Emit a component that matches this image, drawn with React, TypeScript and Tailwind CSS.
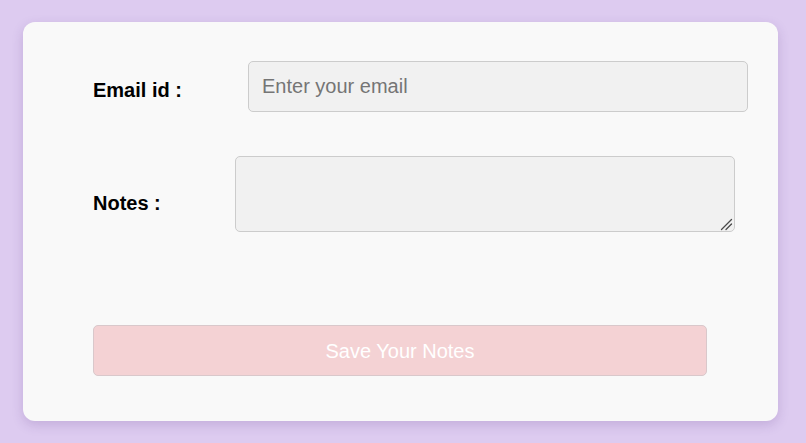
export default function App() {
  return (
    <div className="min-h-screen bg-[#ddcbf0] pl-[23px] pt-[22px] font-['Liberation_Sans',Arial,sans-serif]">
      <form
        className="h-[399px] w-[755px] rounded-xl bg-[#f9f9f9] pl-[70px] pt-[39px] shadow-[0_4px_12px_rgba(80,40,120,0.18)]"
        onSubmit={(e) => e.preventDefault()}
      >
        <div className="flex items-center">
          <label htmlFor="email" className="w-[155px] pt-[7px] text-[20px] font-bold text-black">
            Email id :
          </label>
          <input
            id="email"
            type="email"
            placeholder="Enter your email"
            className="h-[51px] w-[500px] rounded-[5px] border border-[#cccccc] bg-[#f1f1f1] px-[13px] text-[20px] text-black outline-none placeholder:text-[#757575]"
          />
        </div>

        <div className="mt-[44px] flex items-start">
          <label htmlFor="notes" className="mt-[32px] w-[142px] text-[20px] font-bold text-black">
            Notes :
          </label>
          <div className="relative">
            <textarea
              id="notes"
              className="block h-[76px] w-[500px] resize-none rounded-[5px] border border-[#cccccc] bg-[#f1f1f1] px-[13px] py-2 text-[20px] outline-none"
            />
            {/* resize grip */}
            <svg
              className="pointer-events-none absolute bottom-[1px] right-[2px] h-[13px] w-[13px]"
              viewBox="0 0 13 13"
              fill="none"
              stroke="#4a4a4a"
              strokeWidth="1.3"
              strokeLinecap="round"
            >
              <path d="M1.5 11.5 L11.5 1.5" />
              <path d="M6 11.5 L11.5 6" />
            </svg>
          </div>
        </div>

        <button
          type="submit"
          className="mt-[93px] h-[51px] w-[614px] rounded-[5px] border border-[#d9c8cb] bg-[#f4d2d4] text-[20px] text-white"
        >
          Save Your Notes
        </button>
      </form>
    </div>
  )
}
